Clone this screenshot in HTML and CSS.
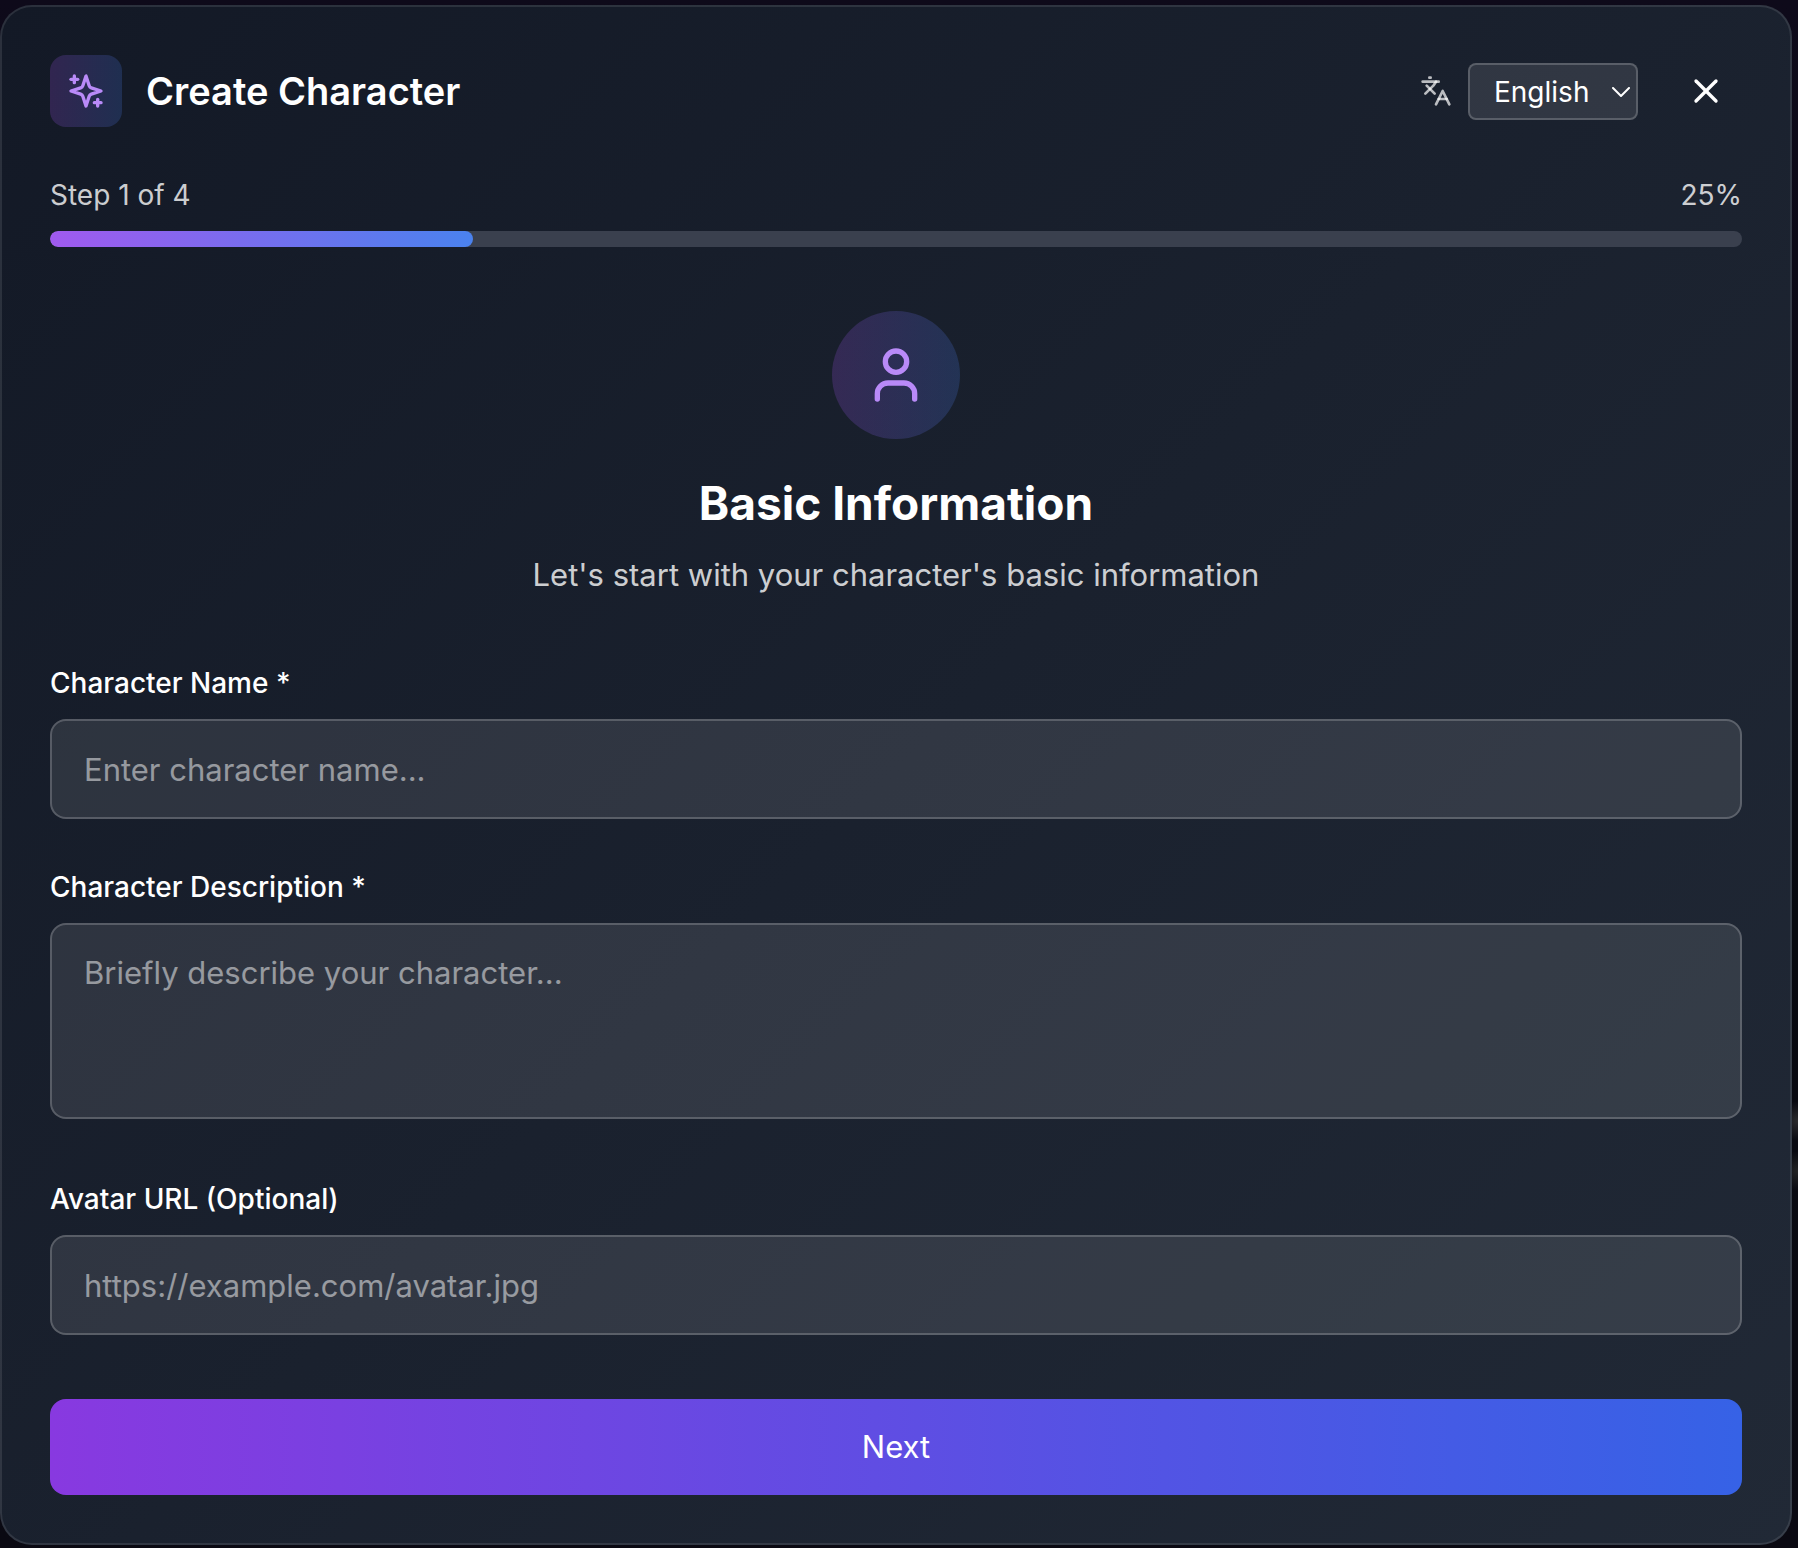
FILE: index.html
```html
<!DOCTYPE html>
<html lang="en">
<head>
<meta charset="utf-8">
<meta name="viewport" content="width=device-width, initial-scale=1">
<title>Create Character</title>
<link rel="stylesheet" href="styles.css">
</head>
<body class="page">
<main class="dialog">
  <header class="header">
    <span class="badge">
      <svg class="icon icon-md" viewBox="0 0 24 24" aria-hidden="true"><path d="m12 3-1.912 5.813a2 2 0 0 1-1.275 1.275L3 12l5.813 1.912a2 2 0 0 1 1.275 1.275L12 21l1.912-5.813a2 2 0 0 1 1.275-1.275L21 12l-5.813-1.912a2 2 0 0 1-1.275-1.275L12 3Z"/><path d="M5 3v4"/><path d="M19 17v4"/><path d="M3 5h4"/><path d="M17 19h4"/></svg>
    </span>
    <h1 class="title">Create Character</h1>
    <div class="language">
      <svg class="icon icon-sm icon-muted" viewBox="0 0 24 24" aria-hidden="true"><path d="m5 8 6 6"/><path d="m4 14 6-6 2-3"/><path d="M2 5h12"/><path d="M7 2h1"/><path d="m22 22-5-10-5 10"/><path d="M14 18h6"/></svg>
      <div class="select-wrap">
        <select class="select" aria-label="Language"><option>English</option></select>
        <svg class="chevron" viewBox="0 0 18 10" aria-hidden="true"><path d="m1 1 8 8 8-8"/></svg>
      </div>
    </div>
    <button class="close" type="button" aria-label="Close">
      <svg class="icon icon-md" viewBox="0 0 24 24" aria-hidden="true"><path d="M18 6 6 18"/><path d="m6 6 12 12"/></svg>
    </button>
  </header>

  <section class="progress">
    <div class="progress-text"><span>Step 1 of 4</span><span>25%</span></div>
    <div class="track"><div class="fill" style="width: 25%"></div></div>
  </section>

  <section class="intro">
    <span class="avatar">
      <svg class="icon icon-lg" viewBox="0 0 24 24" aria-hidden="true"><path d="M19 21v-2a4 4 0 0 0-4-4H9a4 4 0 0 0-4 4v2"/><circle cx="12" cy="7" r="4"/></svg>
    </span>
    <h2 class="heading">Basic Information</h2>
    <p class="subtitle">Let's start with your character's basic information</p>
  </section>

  <form class="form">
    <div class="field">
      <label class="label" for="name">Character Name *</label>
      <input class="control" id="name" type="text" placeholder="Enter character name...">
    </div>
    <div class="field field-area">
      <label class="label" for="description">Character Description *</label>
      <textarea class="control area" id="description" rows="3" placeholder="Briefly describe your character..."></textarea>
    </div>
    <div class="field">
      <label class="label" for="avatar">Avatar URL (Optional)</label>
      <input class="control" id="avatar" type="url" placeholder="https://example.com/avatar.jpg">
    </div>
    <button class="next" type="button">Next</button>
  </form>
</main>
</body>
</html>
```
FILE: styles.css
```css
*, *::before, *::after { box-sizing: border-box; }

.page {
  margin: 0;
  padding: 5px 6px 3px 0;
  background:
    radial-gradient(circle at 100% 1121px, #2a2a2c 0, transparent 20px),
    radial-gradient(circle at 100% 1171px, #222324 0, transparent 20px),
    linear-gradient(#0e0a1a, #07090f 60%, #0a0912);
  color: #fff;
  font-family: Inter, "Liberation Sans", sans-serif;
  font-size: 31px;
  line-height: 48px;
}

.dialog {
  padding: 48px;
  border: 2px solid rgba(255, 255, 255, 0.1);
  border-radius: 32px;
  background: linear-gradient(135deg, #131926, #212936) border-box;
}

.icon {
  display: block;
  flex: none;
  fill: none;
  stroke: currentColor;
  stroke-width: 2;
  stroke-linecap: round;
  stroke-linejoin: round;
}
.icon-sm { width: 32px; height: 32px; }
.icon-md { width: 40px; height: 40px; }
.icon-lg { width: 64px; height: 64px; }
.icon-muted { color: rgba(255, 255, 255, 0.7); }

.header {
  display: flex;
  align-items: center;
  margin-bottom: 48px;
}

.badge, .avatar {
  display: grid;
  place-items: center;
  color: #b98af8;
  background: linear-gradient(90deg, rgba(168, 85, 247, 0.2), rgba(76, 130, 246, 0.2));
}
.badge { width: 72px; height: 72px; border-radius: 16px; }
.avatar { width: 128px; height: 128px; margin-bottom: 32px; border-radius: 50%; }

.title {
  flex: 1;
  margin: 0 0 0 24px;
  font-size: 38px;
  font-weight: 600;
  line-height: 56px;
}

.language {
  display: flex;
  align-items: center;
  gap: 16px;
  margin-right: 32px;
}

.select-wrap { position: relative; }
.select {
  appearance: none;
  display: block;
  width: 170px;
  height: 57px;
  padding: 2px 24px 0;
  border: 2px solid rgba(255, 255, 255, 0.2);
  border-radius: 8px;
  background: rgba(255, 255, 255, 0.1);
  color: #fff;
  font: inherit;
  font-size: 28px;
}
.chevron {
  position: absolute;
  top: 24px;
  right: 8px;
  width: 18px;
  height: 10px;
  fill: none;
  stroke: #fff;
  stroke-width: 2;
  stroke-linecap: round;
  stroke-linejoin: round;
  pointer-events: none;
}

.close {
  display: grid;
  place-items: center;
  width: 72px;
  height: 72px;
  padding: 0;
  border: 0;
  background: none;
  color: #fff;
}

.progress { margin-bottom: 64px; }
.progress-text {
  display: flex;
  justify-content: space-between;
  margin-bottom: 16px;
  color: rgba(255, 255, 255, 0.8);
  font-size: 28px;
  line-height: 40px;
}
.track {
  height: 16px;
  border-radius: 8px;
  background: #3a404e;
  overflow: hidden;
}
.fill {
  height: 100%;
  border-radius: 8px;
  background: linear-gradient(90deg, #a05aee, #4a82ee);
}

.intro {
  display: flex;
  flex-direction: column;
  align-items: center;
  margin-bottom: 64px;
  text-align: center;
}
.heading {
  margin: 0 0 16px;
  font-size: 46px;
  font-weight: 700;
  line-height: 64px;
}
.subtitle { margin: 0; color: rgba(255, 255, 255, 0.8); }

.form { display: flex; flex-direction: column; }
.field {
  display: flex;
  flex-direction: column;
  gap: 16px;
  margin-bottom: 48px;
}
.field-area { margin-bottom: 60px; }
.label {
  font-size: 28px;
  font-weight: 500;
  line-height: 40px;
}
.control {
  display: block;
  width: 100%;
  height: 100px;
  padding: 24px 32px;
  border: 2px solid rgba(255, 255, 255, 0.2);
  border-radius: 16px;
  background: rgba(255, 255, 255, 0.1);
  color: #fff;
  font: inherit;
}
.area { height: auto; resize: none; }
.control::placeholder { color: rgba(255, 255, 255, 0.5); }

.next {
  height: 96px;
  margin-top: 16px;
  border: 0;
  border-radius: 16px;
  background: linear-gradient(90deg, #8839e0, #3662e6);
  color: #fff;
  font: inherit;
}
```
